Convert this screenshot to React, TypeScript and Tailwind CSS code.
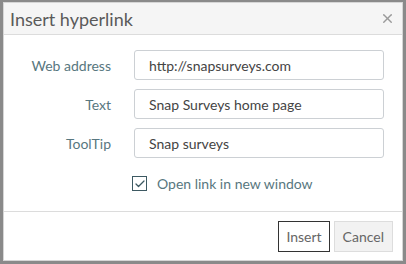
import { Check, X } from 'lucide-react'

export default function App() {
  const fields = [
    { label: 'Web address', value: 'http://snapsurveys.com' },
    { label: 'Text', value: 'Snap Surveys home page' },
    { label: 'ToolTip', value: 'Snap surveys' },
  ]

  return (
    <div className="w-[406px] h-[264px] bg-[#8a8a8a] pt-[2px] pl-[3px] pr-[3px] pb-[3px] font-['Lato',sans-serif]">
      <div className="h-full flex flex-col bg-white border border-[#d6d6d6]">
        {/* header */}
        <div className="h-[32px] flex items-center justify-between bg-[#f5f5f5] border-b border-[#dcdcdc] pl-[6px] pr-[7px]">
          <h2 className="text-[18px] text-[#5a5a5a] leading-none">Insert hyperlink</h2>
          <X size={15} strokeWidth={2.2} className="text-[#9a9a9a]" />
        </div>

        {/* form */}
        <div className="flex-1 flex flex-col gap-[9px] pt-[15px] pl-[4px] pr-[18px]">
          {fields.map((f) => (
            <div key={f.label} className="flex items-center">
              <label className="w-[103px] text-right text-[14px] text-[#587780]">{f.label}</label>
              <div className="ml-[23px] flex-1 h-[30px] flex items-center border border-[#ccd0d4] rounded-[3px] px-[14px] text-[14px] text-[#444]">
                {f.value}
              </div>
            </div>
          ))}
          <div className="flex items-center mt-[6px] ml-[124px]">
            <div className="w-[15px] h-[15px] border border-[#3d5962] flex items-center justify-center">
              <Check size={12} strokeWidth={2.5} className="text-[#3d5962]" />
            </div>
            <span className="ml-[10px] text-[14px] text-[#587780]">Open link in new window</span>
          </div>
        </div>

        {/* footer */}
        <div className="h-[49px] flex items-center justify-end gap-[4px] border-t border-[#dcdcdc] pr-[9px]">
          <button className="h-[31px] px-[7px] border border-[#333] bg-white text-[14px] text-[#666]">Insert</button>
          <button className="h-[31px] px-[8px] border border-[#ddd] bg-[#f2f2f2] text-[14px] text-[#666]">Cancel</button>
        </div>
      </div>
    </div>
  )
}
